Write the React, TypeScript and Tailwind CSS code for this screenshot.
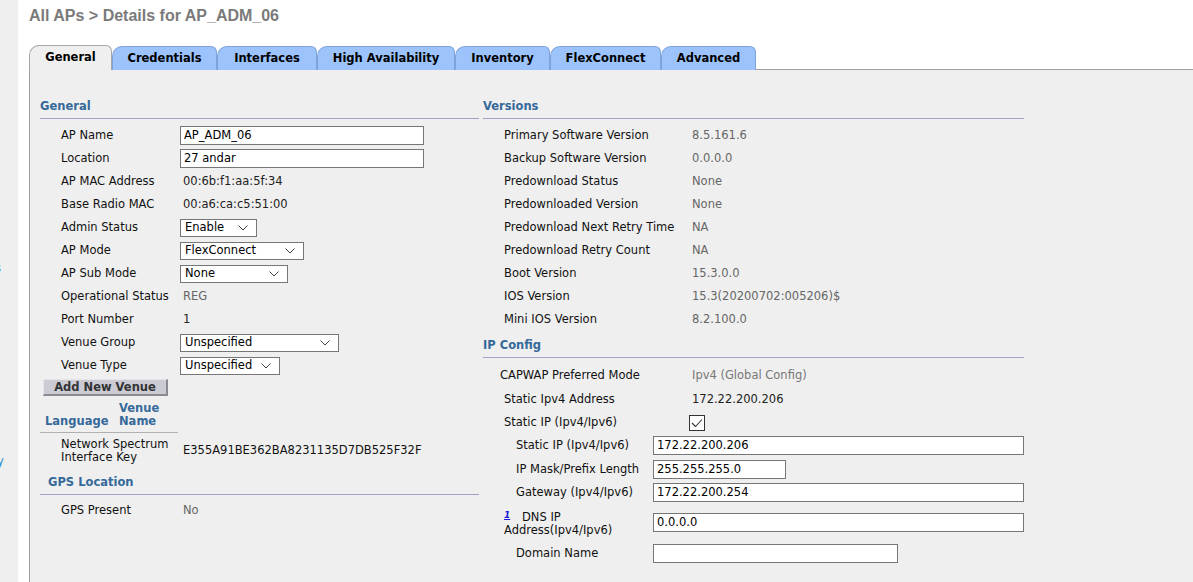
import type { ReactNode } from 'react';

const font = "font-['DejaVu_Sans',Verdana,sans-serif]";

const tabs = [
  { name: 'General', w: 'w-[83px]' },
  { name: 'Credentials', w: 'w-[105px]' },
  { name: 'Interfaces', w: 'w-[100px]' },
  { name: 'High Availability', w: 'w-[138px]' },
  { name: 'Inventory', w: 'w-[95px]' },
  { name: 'FlexConnect', w: 'w-[111px]' },
  { name: 'Advanced', w: 'w-[95px]' },
];

function SectionHeader({ title, className = '' }: { title: string; className?: string }) {
  return (
    <div className={`h-[21px] border-b border-[#a0a3c4] text-[11.5px] leading-[16px] font-bold text-[#35699a] ${className}`}>
      {title}
    </div>
  );
}

function Row({ label, children, labelW, indent = 'pl-[21px]' }: { label: ReactNode; children?: ReactNode; labelW: string; indent?: string }) {
  return (
    <div className="h-[23px] flex items-center">
      <div className={`${labelW} ${indent} shrink-0 text-[#111]`}>{label}</div>
      <div className="flex items-center">{children}</div>
    </div>
  );
}

function TextInput({ value, w }: { value: string; w: string }) {
  return (
    <div className={`${w} h-[19px] bg-white border border-[#767676] pl-[3px] text-[11.5px] leading-[17px] text-black`}>
      {value}
    </div>
  );
}

function Select({ value, w }: { value: string; w: string }) {
  return (
    <div className={`${w} h-[18px] bg-white border border-[#767676] pl-[4px] pr-[8px] flex items-center justify-between text-[11.5px] text-black`}>
      <span>{value}</span>
      <svg width="10" height="6" viewBox="0 0 10 6" fill="none" stroke="#444" strokeWidth="1">
        <path d="M0.5 0.5 L5 5 L9.5 0.5" />
      </svg>
    </div>
  );
}

export default function App() {
  return (
    <div className={`flex h-[582px] w-[1193px] overflow-hidden bg-white text-[11.5px] ${font}`}>
      <div className="w-[18px] shrink-0 bg-[#efefef] overflow-hidden text-[#2a8fd0] text-[11.5px]">
        <div className="mt-[260px] ml-[-5px] leading-[16px]">s</div>
        <div className="mt-[177px] ml-[-3px] leading-[16px]">y</div>
      </div>
      <div className="w-[11px] shrink-0 bg-white" />
      <div className="flex-1 flex flex-col">
        <div className="h-[45px] pt-[7px] text-[16px] leading-[18px] font-bold text-[#7a7a7a] font-['Liberation_Sans',Arial,sans-serif]">
          All APs &gt; Details for AP_ADM_06
        </div>
        <div className="flex items-end h-[25px]">
          {tabs.map((t, i) =>
            i === 0 ? (
              <div
                key={t.name}
                className={`${t.w} h-[25px] shrink-0 bg-[#efefef] border border-b-0 border-[#a6a6a6] rounded-tl-[10px] rounded-tr-[6px] flex items-center justify-center font-bold text-[11.5px] text-black`}
              >
                {t.name}
              </div>
            ) : (
              <div
                key={t.name}
                className={`${t.w} h-[24px] shrink-0 bg-[#9cc3fb] border border-b-0 border-[#7ea3da] rounded-tl-[10px] rounded-tr-[6px] flex items-center justify-center font-bold text-[11.5px] text-black`}
              >
                {t.name}
              </div>
            )
          )}
          <div className="flex-1 h-[25px] border-b border-[#a0a0a0]" />
        </div>
        <div className="flex-1 bg-[#efefef] border-l border-[#a0a0a0] pl-[10px] pt-[28px] flex gap-[4px]">
          {/* left column */}
          <div className="w-[439px] shrink-0">
            <SectionHeader title="General" />
            <div className="mt-[5px]">
              <Row label="AP Name" labelW="w-[140px]"><TextInput value="AP_ADM_06" w="w-[244px]" /></Row>
              <Row label="Location" labelW="w-[140px]"><TextInput value="27 andar" w="w-[244px]" /></Row>
              <Row label="AP MAC Address" labelW="w-[140px]"><span className="pl-[3px] text-[#222]">00:6b:f1:aa:5f:34</span></Row>
              <Row label="Base Radio MAC" labelW="w-[140px]"><span className="pl-[3px] text-[#222]">00:a6:ca:c5:51:00</span></Row>
              <Row label="Admin Status" labelW="w-[140px]"><Select value="Enable" w="w-[77px]" /></Row>
              <Row label="AP Mode" labelW="w-[140px]"><Select value="FlexConnect" w="w-[124px]" /></Row>
              <Row label="AP Sub Mode" labelW="w-[140px]"><Select value="None" w="w-[108px]" /></Row>
              <Row label="Operational Status" labelW="w-[140px]"><span className="pl-[3px] text-[#666]">REG</span></Row>
              <Row label="Port Number" labelW="w-[140px]"><span className="pl-[3px] text-[#222]">1</span></Row>
              <Row label="Venue Group" labelW="w-[140px]"><Select value="Unspecified" w="w-[159px]" /></Row>
              <Row label="Venue Type" labelW="w-[140px]"><Select value="Unspecified" w="w-[100px]" /></Row>
            </div>
            <button className="mt-[2px] ml-[3px] w-[125px] h-[17px] bg-[#cbcbd3] border-t border-l border-t-[#e4e4ea] border-l-[#e4e4ea] border-b-2 border-r-2 border-b-[#8a8a92] border-r-[#8a8a92] font-bold text-[11.5px] leading-[13px] text-[#333]">
              Add New Venue
            </button>
            <div className="w-[138px] pt-[6px] pb-[4px] border-b border-[#b0b0b0] flex items-end font-bold text-[11.5px] leading-[13px] text-[#35699a]">
              <div className="w-[79px] pl-[5px]">Language</div>
              <div>Venue<br />Name</div>
            </div>
            <div className="flex items-center pt-[5px]">
              <div className="w-[143px] pl-[21px] leading-[13px] text-[#111]">
                Network Spectrum<br />Interface Key
              </div>
              <div className="text-[#111]">E355A91BE362BA8231135D7DB525F32F</div>
            </div>
            <SectionHeader title="GPS Location" className="mt-[10px] pl-[8px]" />
            <div className="mt-[4px]">
              <Row label="GPS Present" labelW="w-[140px]"><span className="pl-[3px] text-[#666]">No</span></Row>
            </div>
          </div>
          {/* right column */}
          <div className="w-[541px] shrink-0">
            <SectionHeader title="Versions" />
            <div className="mt-[5px]">
              <Row label="Primary Software Version" labelW="w-[209px]"><span className="text-[#666]">8.5.161.6</span></Row>
              <Row label="Backup Software Version" labelW="w-[209px]"><span className="text-[#666]">0.0.0.0</span></Row>
              <Row label="Predownload Status" labelW="w-[209px]"><span className="text-[#666]">None</span></Row>
              <Row label="Predownloaded Version" labelW="w-[209px]"><span className="text-[#666]">None</span></Row>
              <Row label="Predownload Next Retry Time" labelW="w-[209px]"><span className="text-[#666]">NA</span></Row>
              <Row label="Predownload Retry Count" labelW="w-[209px]"><span className="text-[#666]">NA</span></Row>
              <Row label="Boot Version" labelW="w-[209px]"><span className="text-[#666]">15.3.0.0</span></Row>
              <Row label="IOS Version" labelW="w-[209px]"><span className="text-[#666]">15.3(20200702:005206)$</span></Row>
              <Row label="Mini IOS Version" labelW="w-[209px]"><span className="text-[#666]">8.2.100.0</span></Row>
            </div>
            <SectionHeader title="IP Config" className="mt-[6px]" />
            <div className="mt-[6px]">
              <Row label="CAPWAP Preferred Mode" labelW="w-[209px]" indent="pl-[17px]"><span className="text-[#777]">Ipv4 (Global Config)</span></Row>
            </div>
            <div className="mt-[1px]">
              <Row label="Static Ipv4 Address" labelW="w-[209px]"><span className="text-[#222]">172.22.200.206</span></Row>
              <Row label="Static IP (Ipv4/Ipv6)" labelW="w-[209px]">
                <div className="ml-[-3px] w-[16px] h-[16px] bg-white border border-[#333] flex items-center justify-center">
                  <svg width="12" height="10" viewBox="0 0 12 10" fill="none" stroke="#333" strokeWidth="1.1">
                    <path d="M1 5 L4.5 8.5 L11 1.5" />
                  </svg>
                </div>
              </Row>
              <Row label="Static IP (Ipv4/Ipv6)" labelW="w-[170px]" indent="pl-[33px]"><TextInput value="172.22.200.206" w="w-[371px]" /></Row>
              <div className="mt-[1px]">
                <Row label="IP Mask/Prefix Length" labelW="w-[170px]" indent="pl-[33px]"><TextInput value="255.255.255.0" w="w-[133px]" /></Row>
              </div>
              <Row label="Gateway (Ipv4/Ipv6)" labelW="w-[170px]" indent="pl-[33px]"><TextInput value="172.22.200.254" w="w-[371px]" /></Row>
              <div className="flex items-start pt-[7px]">
                <div className="w-[170px] pl-[21px] leading-[13px] text-[#111]">
                  <a className="inline-block w-[18px] align-top text-[9px] leading-[9px] font-bold italic underline text-[#1a1adb]">1</a>
                  DNS IP<br />Address(Ipv4/Ipv6)
                </div>
                <div className="mt-[2px]"><TextInput value="0.0.0.0" w="w-[371px]" /></div>
              </div>
              <div className="mt-[5px]">
                <Row label="Domain Name" labelW="w-[170px]" indent="pl-[33px]"><TextInput value="" w="w-[245px]" /></Row>
              </div>
            </div>
          </div>
        </div>
      </div>
    </div>
  );
}
